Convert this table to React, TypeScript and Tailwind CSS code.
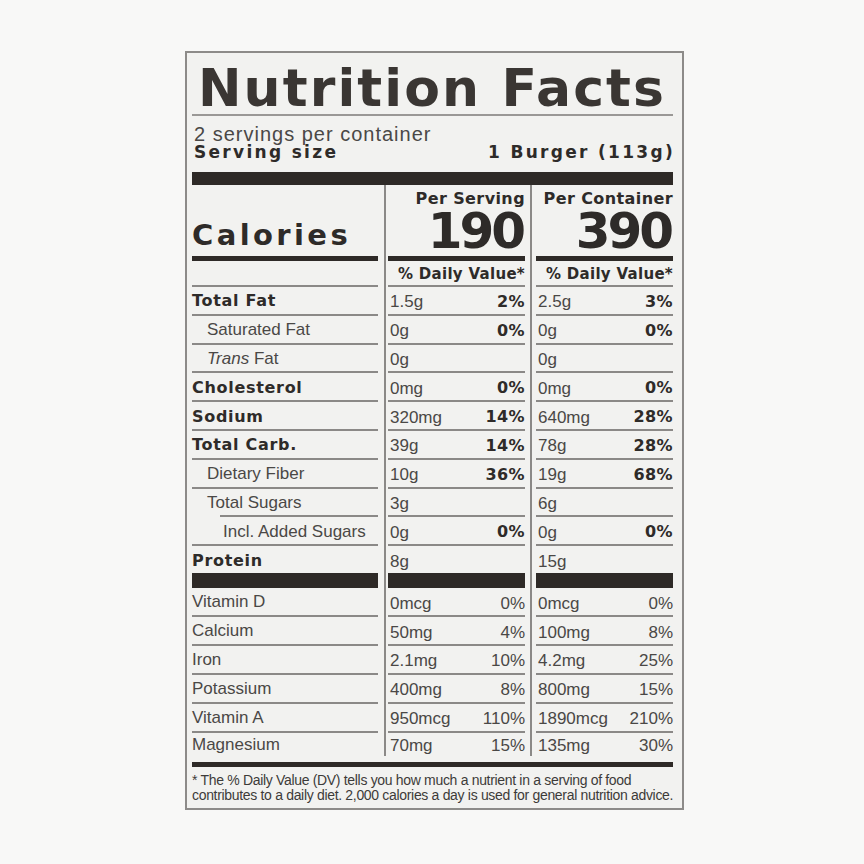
import React from "react";

const bold = "font-['DejaVu_Sans',sans-serif] font-bold text-[#2e2b29]";
const reg = "font-['Liberation_Sans',Arial,sans-serif] text-[#4a4846]";
const rule = "border-b-2 border-[#8b8987]";

type Val = { v: string; p?: string };
type Nut = { name: React.ReactNode; strong?: boolean; indent?: number; a: Val; b: Val; shortLine?: boolean };

const nutrients: Nut[] = [
  { name: "Total Fat", strong: true, a: { v: "1.5g", p: "2%" }, b: { v: "2.5g", p: "3%" } },
  { name: "Saturated Fat", indent: 1, a: { v: "0g", p: "0%" }, b: { v: "0g", p: "0%" } },
  { name: <><i>Trans</i> Fat</>, indent: 1, a: { v: "0g" }, b: { v: "0g" } },
  { name: "Cholesterol", strong: true, a: { v: "0mg", p: "0%" }, b: { v: "0mg", p: "0%" } },
  { name: "Sodium", strong: true, a: { v: "320mg", p: "14%" }, b: { v: "640mg", p: "28%" } },
  { name: "Total Carb.", strong: true, a: { v: "39g", p: "14%" }, b: { v: "78g", p: "28%" } },
  { name: "Dietary Fiber", indent: 1, a: { v: "10g", p: "36%" }, b: { v: "19g", p: "68%" } },
  { name: "Total Sugars", indent: 1, shortLine: true, a: { v: "3g" }, b: { v: "6g" } },
  { name: "Incl. Added Sugars", indent: 2, a: { v: "0g", p: "0%" }, b: { v: "0g", p: "0%" } },
];

const vitamins: [string, Val, Val][] = [
  ["Vitamin D", { v: "0mcg", p: "0%" }, { v: "0mcg", p: "0%" }],
  ["Calcium", { v: "50mg", p: "4%" }, { v: "100mg", p: "8%" }],
  ["Iron", { v: "2.1mg", p: "10%" }, { v: "4.2mg", p: "25%" }],
  ["Potassium", { v: "400mg", p: "8%" }, { v: "800mg", p: "15%" }],
  ["Vitamin A", { v: "950mcg", p: "110%" }, { v: "1890mcg", p: "210%" }],
  ["Magnesium", { v: "70mg", p: "15%" }, { v: "135mg", p: "30%" }],
];

type RowProps = {
  h: string;
  cell?: string;
  c1cls?: string;
  c1?: React.ReactNode;
  c2?: React.ReactNode;
  c3?: React.ReactNode;
};

const Row = ({ h, cell = "", c1cls, c1, c2, c3 }: RowProps) => (
  <div className={`flex ${h}`}>
    <div className={`w-[186px] shrink-0 ${c1cls ?? cell}`}>{c1}</div>
    <div className="flex w-[10px] shrink-0 pl-[6px]">
      <div className="w-[2px] bg-[#8b8987]" />
    </div>
    <div className={`w-[137px] shrink-0 ${cell}`}>{c2}</div>
    <div className="flex w-[11px] shrink-0 pl-[5px]">
      <div className="w-[2px] bg-[#8b8987]" />
    </div>
    <div className={`w-[137px] shrink-0 ${cell}`}>{c3}</div>
  </div>
);

const Amount = ({ v, p, heavy }: Val & { heavy?: boolean }) => (
  <div className="flex w-full items-center justify-between pl-[2px] pt-[3px]">
    <span className={`${reg} text-[17px] leading-none`}>{v}</span>
    {p && (
      <span
        className={
          heavy
            ? `${bold} text-[16px] leading-none tracking-[0.4px]`
            : `${reg} text-[17px] leading-none`
        }
      >
        {p}
      </span>
    )}
  </div>
);

const Label = ({ n }: { n: Nut }) => (
  <span
    className={`${
      n.strong ? `${bold} text-[16px] tracking-[0.7px] pt-[2px]` : `${reg} text-[17px] pt-[1px]`
    } leading-none ${n.indent === 1 ? "pl-[15px]" : n.indent === 2 ? "pl-[31px]" : ""}`}
  >
    {n.name}
  </span>
);

const App = () => {
  return (
    <div className="h-[864px] w-[864px] bg-[#f8f8f7] pl-[185px] pt-[51px]">
      <div className="w-[499px] border-2 border-[#8d8b89] bg-[#f2f2f0] pb-[5.5px] pl-[5px] pr-[9px]">
        <div className={`${bold} pl-[6px] pt-[9px] text-[52px] leading-[52px] tracking-[2.1px] text-[#3a3633]`}>
          Nutrition Facts
        </div>
        <div className="h-[2px] bg-[#9a9896]" />
        <div className={`${reg} mt-[8px] pl-[2px] text-[20px] leading-[20px] tracking-[1px]`}>
          2 servings per container
        </div>
        <div className={`${bold} flex justify-between pl-[2px] text-[17px] leading-[17px] tracking-[2.3px]`}>
          <span>Serving size</span>
          <span className="-mr-[2px]">1 Burger (113g)</span>
        </div>
        <div className="mt-[11px] h-[13px] bg-[#2e2a27]" />

        <div className="flex flex-col">
          <Row
            h="h-[71px]"
            c1cls="flex flex-col justify-end pb-[6px]"
            c1={<span className={`${bold} text-[29px] leading-none tracking-[3.4px]`}>Calories</span>}
            cell="flex flex-col items-end pt-[6px]"
            c2={
              <>
                <span className={`${bold} text-[16px] leading-none tracking-[0.4px]`}>Per Serving</span>
                <span className={`${bold} mr-[2px] text-[50px] leading-[48px] tracking-[-3px] text-[#2b2826]`}>190</span>
              </>
            }
            c3={
              <>
                <span className={`${bold} text-[16px] leading-none tracking-[0.4px]`}>Per Container</span>
                <span className={`${bold} mr-[2px] text-[50px] leading-[48px] tracking-[-3px] text-[#2b2826]`}>390</span>
              </>
            }
          />
          <Row h="h-[5px]" cell="bg-[#2e2a27]" />
          <Row
            h="h-[26px]"
            cell={`flex justify-end pt-[5.5px] ${rule}`}
            c2={<span className={`${bold} text-[15px] leading-none tracking-[0.3px]`}>% Daily Value*</span>}
            c3={<span className={`${bold} text-[15px] leading-none tracking-[0.3px]`}>% Daily Value*</span>}
          />
          {nutrients.map((n, i) => (
            <Row
              key={i}
              h="h-[28.8px]"
              cell={`flex items-center ${rule}`}
              c1cls={n.shortLine ? "flex flex-col" : undefined}
              c1={
                n.shortLine ? (
                  <>
                    <div className="flex flex-1 items-center">
                      <Label n={n} />
                    </div>
                    <div className="ml-[28px] h-[2px] bg-[#8b8987]" />
                  </>
                ) : (
                  <Label n={n} />
                )
              }
              c2={<Amount {...n.a} heavy />}
              c3={<Amount {...n.b} heavy />}
            />
          ))}
          <Row
            h="h-[27px]"
            cell="flex items-center"
            c1={<span className={`${bold} pt-[2px] text-[16px] leading-none tracking-[0.7px]`}>Protein</span>}
            c2={<Amount v="8g" />}
            c3={<Amount v="15g" />}
          />
          <Row h="h-[15px]" cell="bg-[#2e2a27]" />
          {vitamins.map(([name, a, b], i) => (
            <Row
              key={name}
              h={i === vitamins.length - 1 ? "h-[23px]" : "h-[28.9px]"}
              cell={i === vitamins.length - 1 ? "flex items-center" : `flex items-center ${rule}`}
              c1={<span className={`${reg} text-[17px] leading-none`}>{name}</span>}
              c2={<Amount {...a} />}
              c3={<Amount {...b} />}
            />
          ))}
        </div>

        <div className="mt-[6px] h-[5.5px] bg-[#2e2a27]" />
        <p className="mt-[5.5px] whitespace-nowrap font-['Liberation_Sans',Arial,sans-serif] text-[14px] leading-[15px] tracking-[-0.32px] text-[#3d3b39]">
          * The % Daily Value (DV) tells you how much a nutrient in a serving of food
          <br />
          contributes to a daily diet. 2,000 calories a day is used for general nutrition advice.
        </p>
      </div>
    </div>
  );
};

export default App;
